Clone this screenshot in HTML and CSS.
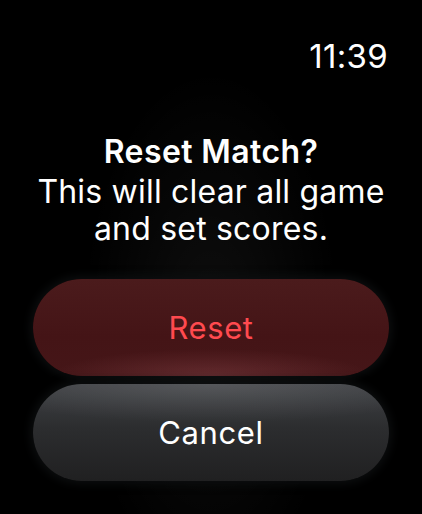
FILE: index.html
```html
<!DOCTYPE html>
<html lang="en">
<head>
    <meta charset="UTF-8">
    <meta name="viewport" content="width=device-width, initial-scale=1.0">
    <title>Reset Match</title>
    <link rel="stylesheet" href="styles.css">
</head>
<body>
    <div class="screen">
        <div class="status-bar">
            <span class="time">11:39</span>
        </div>
        <div class="alert">
            <h1 class="alert-title">Reset Match?</h1>
            <p class="alert-message">This will clear all game and set scores.</p>
        </div>
        <div class="actions">
            <button class="btn btn-destructive">Reset</button>
            <button class="btn btn-cancel">Cancel</button>
        </div>
    </div>
</body>
</html>
```

FILE: styles.css
```css
* {
    margin: 0;
    padding: 0;
    box-sizing: border-box;
}
body {
    background: #000;
    font-family: Inter, "Noto Sans", sans-serif;
    color: #fff;
}
.screen {
    width: 422px;
    height: 514px;
    overflow: hidden;
    display: flex;
    flex-direction: column;
    background:
        radial-gradient(ellipse 130px 260px at 50% 64%, rgba(255, 255, 255, 0.06), rgba(255, 255, 255, 0) 100%),
        #000;
}
.status-bar {
    display: flex;
    justify-content: flex-end;
    padding: 36px 34px 0 0;
    height: 80px;
}
.time {
    font-size: 33px;
    line-height: 40px;
    font-weight: 400;
    letter-spacing: 0.3px;
}
.alert {
    text-align: center;
    padding: 0 30px;
    margin-top: 52px;
}
.alert-title {
    font-size: 32px;
    line-height: 40px;
    font-weight: 600;
    letter-spacing: 0.4px;
}
.alert-message {
    font-size: 32px;
    line-height: 37px;
    font-weight: 400;
    letter-spacing: 0.2px;
    margin-top: 1px;
}
.actions {
    display: flex;
    flex-direction: column;
    gap: 8px;
    padding: 0 33px;
    margin-top: 32px;
}
.btn {
    height: 97px;
    border: none;
    border-radius: 49px;
    font-family: inherit;
    font-size: 31px;
    font-weight: 400;
    letter-spacing: 0.6px;
    box-shadow: 0 0 10px 3px rgba(14, 16, 18, 0.85);
}
.btn-destructive {
    color: #ff4a4f;
    background:
        radial-gradient(ellipse 45% 28% at 50% 100%, rgba(255, 150, 160, 0.16), rgba(255, 150, 160, 0) 100%),
        linear-gradient(#4b1b1c, #441416 60%, #451618);
}
.btn-cancel {
    color: #fff;
    background:
        radial-gradient(ellipse 70% 40% at 50% 0%, rgba(255, 255, 255, 0.12), rgba(255, 255, 255, 0) 100%),
        linear-gradient(#3f4145, #2c2d2f 45%, #202021);
}
```
